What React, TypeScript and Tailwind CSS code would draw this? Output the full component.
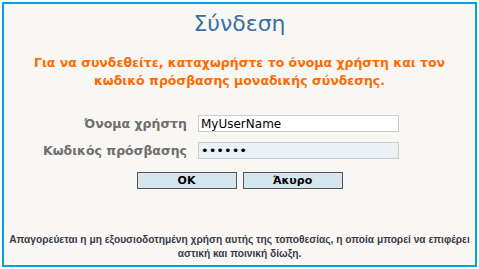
export default function App() {
  return (
    <div className="w-[479px] h-[269px] p-[2px] bg-white" style={{ fontFamily: '"DejaVu Sans", Verdana, sans-serif' }}>
      <div className="h-full border-2 border-[#00a3e0] bg-[#f8f7f3] flex flex-col items-center">
        {/* Title */}
        <h1 className="mt-[6px] text-[22px] leading-[28px] text-[#3a6ea5] font-normal">Σύνδεση</h1>

        {/* Instructions */}
        <p className="mt-[16px] text-center text-[12.5px] leading-[18px] font-bold text-[#ff6a00] whitespace-nowrap">
          Για να συνδεθείτε, καταχωρήστε το όνομα χρήστη και τον
          <br />
          κωδικό πρόσβασης μοναδικής σύνδεσης.
        </p>

        {/* Form */}
        <div className="mt-[25px] w-full flex flex-col gap-[10px]">
          <div className="flex items-center">
            <label className="w-[183px] text-right text-[12.5px] leading-[17px] font-bold text-[#6e6e6e]">Όνομα χρήστη</label>
            <input
              className="ml-[11px] w-[201px] h-[17px] border border-[#cccccc] bg-white px-[2px] text-[12px] leading-[15px] text-black outline-none"
              defaultValue="MyUserName"
            />
          </div>
          <div className="flex items-center">
            <label className="w-[183px] text-right text-[12.5px] leading-[17px] font-bold text-[#6e6e6e]">Κωδικός πρόσβασης</label>
            <input
              type="password"
              className="ml-[11px] w-[201px] h-[17px] border border-[#cccccc] bg-[#eaf2f8] px-[2px] text-[13px] leading-[15px] text-black outline-none"
              defaultValue="123456"
            />
          </div>
        </div>

        {/* Buttons */}
        <div className="mt-[13px] flex gap-[6px]">
          <button className="w-[100px] h-[17px] border border-[#555555] bg-[#d6e6ef] text-[11px] leading-[15px] font-bold text-black">
            OK
          </button>
          <button className="w-[100px] h-[17px] border border-[#555555] bg-[#d6e6ef] text-[11px] leading-[15px] font-bold text-black">
            Άκυρο
          </button>
        </div>

        {/* Footer */}
        <p
          className="mt-auto mb-[4px] text-center text-[10.2px] leading-[14px] font-bold text-[#3b3b48] whitespace-nowrap"
          style={{ fontFamily: '"Liberation Sans", Arial, sans-serif' }}
        >
          Απαγορεύεται η μη εξουσιοδοτημένη χρήση αυτής της τοποθεσίας, η οποία μπορεί να επιφέρει
          <br />
          αστική και ποινική δίωξη.
        </p>
      </div>
    </div>
  );
}
